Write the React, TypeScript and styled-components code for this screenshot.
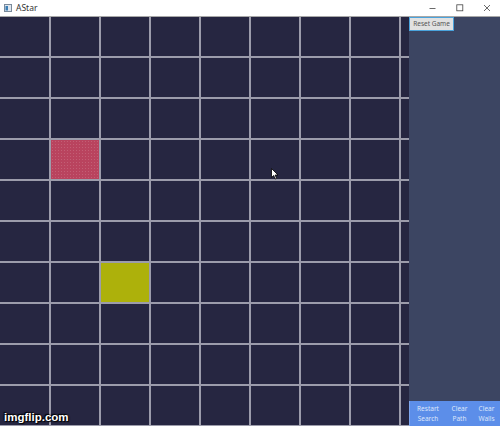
import React from "react";
import styled, { createGlobalStyle } from "styled-components";

const GlobalStyle = createGlobalStyle`
    html, body {
        margin: 0;
        padding: 0;
        background: #ffffff;
    }
    body {
        font-family: "Noto Sans", "Open Sans", "Liberation Sans", sans-serif;
    }
`;

const COLS = 9;
const ROWS = 10;

const colors = {
    CELL: "#262641",
    LINE: "#9c9cab",
    SIDEBAR: "#3c4562",
    WALL: "#b9435e",
    START: "#adb10b",
    BUTTON_BLUE: "#5c8ee9",
};

const Window = styled.div`
    position: relative;
    width: 500px;
    height: 426px;
    overflow: hidden;
    display: flex;
    flex-direction: column;
`;

const TitleBar = styled.div`
    height: 16px;
    flex: 0 0 16px;
    display: flex;
    align-items: center;
    background: #ffffff;
    border-bottom: 1px solid #a8a8a8;
    padding-left: 4px;
`;

const TitleText = styled.span`
    font-size: 8.5px;
    color: #333;
    margin-left: 4px;
    line-height: 1;
`;

const Controls = styled.div`
    margin-left: auto;
    display: flex;
    height: 100%;
`;

const ControlButton = styled.div`
    width: 27px;
    height: 16px;
    display: flex;
    align-items: center;
    justify-content: center;
`;

const Body = styled.div`
    flex: 1;
    display: flex;
    min-height: 0;
`;

const GridArea = styled.div`
    width: 409px;
    flex: 0 0 409px;
    overflow: hidden;
    background: ${colors.LINE};
`;

const Grid = styled.div`
    display: grid;
    grid-template-columns: 49px repeat(${COLS - 1}, 48px);
    grid-auto-rows: 39px;
    gap: 2px;
    width: max-content;
`;

interface CellProps {
    $kind: "empty" | "wall" | "start";
}

const Cell = styled.div<CellProps>`
    background: ${({ $kind }) =>
        $kind === "wall" ? colors.WALL : $kind === "start" ? colors.START : colors.CELL};
    ${({ $kind }) =>
        $kind === "wall"
            ? `background-image: radial-gradient(rgba(255,255,255,0.14) 0.6px, transparent 0.8px);
               background-size: 3px 3px;`
            : ""}
`;

const Sidebar = styled.div`
    flex: 1;
    background: ${colors.SIDEBAR};
    display: flex;
    flex-direction: column;
    justify-content: space-between;
`;

const ResetButton = styled.button`
    align-self: flex-start;
    width: 45px;
    height: 14px;
    padding: 0;
    margin: 0;
    background: #e1e1e1;
    border: 1px solid #4aa3dc;
    color: #555;
    font-family: inherit;
    font-size: 6.5px;
    line-height: 1;
`;

const ActionRow = styled.div`
    display: flex;
    height: 25px;
    background: ${colors.BUTTON_BLUE};
    border-left: 1px solid #7ea6ee;
`;

const ActionButton = styled.button<{ $width: number }>`
    width: ${({ $width }) => $width}px;
    height: 100%;
    padding: 0;
    margin: 0;
    border: none;
    background: transparent;
    color: #dce6fb;
    font-family: inherit;
    font-size: 6.5px;
    line-height: 10px;
    text-align: center;
`;

const Watermark = styled.div`
    position: absolute;
    left: 4px;
    bottom: 3px;
    font-family: "Liberation Sans", Arial, sans-serif;
    font-weight: bold;
    font-size: 11.5px;
    color: #ffffff;
    text-shadow: 0 0 2px #000, 1px 1px 1px #000, -1px -1px 1px #000;
`;

const Cursor = styled.svg`
    position: absolute;
    left: 271px;
    top: 168px;
`;

const cellKind = (r: number, c: number): CellProps["$kind"] => {
    if (r === 3 && c === 1) return "wall";
    if (r === 6 && c === 2) return "start";
    return "empty";
};

export default function App() {
    const cells = [];
    for (let r = 0; r < ROWS; r++) {
        for (let c = 0; c < COLS; c++) {
            cells.push(<Cell key={`${r}-${c}`} $kind={cellKind(r, c)} />);
        }
    }

    return (
        <>
            <GlobalStyle />
            <Window>
                <TitleBar>
                    <svg width="8" height="8" viewBox="0 0 8 8">
                        <rect x="0.5" y="0.5" width="7" height="7" fill="#dfe6ee" stroke="#7a8a9a" />
                        <rect x="1.5" y="2" width="2.5" height="4.5" fill="#3b7fb5" />
                    </svg>
                    <TitleText>AStar</TitleText>
                    <Controls>
                        <ControlButton>
                            <svg width="8" height="8" viewBox="0 0 8 8">
                                <line x1="0.5" y1="4.5" x2="6.5" y2="4.5" stroke="#444" strokeWidth="0.8" />
                            </svg>
                        </ControlButton>
                        <ControlButton>
                            <svg width="8" height="8" viewBox="0 0 8 8">
                                <rect x="0.8" y="0.8" width="6" height="6" fill="none" stroke="#444" strokeWidth="0.8" />
                            </svg>
                        </ControlButton>
                        <ControlButton>
                            <svg width="8" height="8" viewBox="0 0 8 8">
                                <path d="M1 1 L7 7 M7 1 L1 7" stroke="#444" strokeWidth="0.8" />
                            </svg>
                        </ControlButton>
                    </Controls>
                </TitleBar>
                <Body>
                    <GridArea>
                        <Grid>{cells}</Grid>
                    </GridArea>
                    <Sidebar>
                        <ResetButton>Reset Game</ResetButton>
                        <ActionRow>
                            <ActionButton $width={36}>Restart<br />Search</ActionButton>
                            <ActionButton $width={27}>Clear<br />Path</ActionButton>
                            <ActionButton $width={27}>Clear<br />Walls</ActionButton>
                        </ActionRow>
                    </Sidebar>
                </Body>
                <Cursor width="8" height="12" viewBox="0 0 8 12">
                    <path d="M0.5 0.5 L0.5 9.5 L2.7 7.5 L4.3 11 L5.6 10.4 L4.1 7 L7 7 Z" fill="#fff" stroke="#000" strokeWidth="0.8" />
                </Cursor>
                <Watermark>imgflip.com</Watermark>
            </Window>
        </>
    );
}
